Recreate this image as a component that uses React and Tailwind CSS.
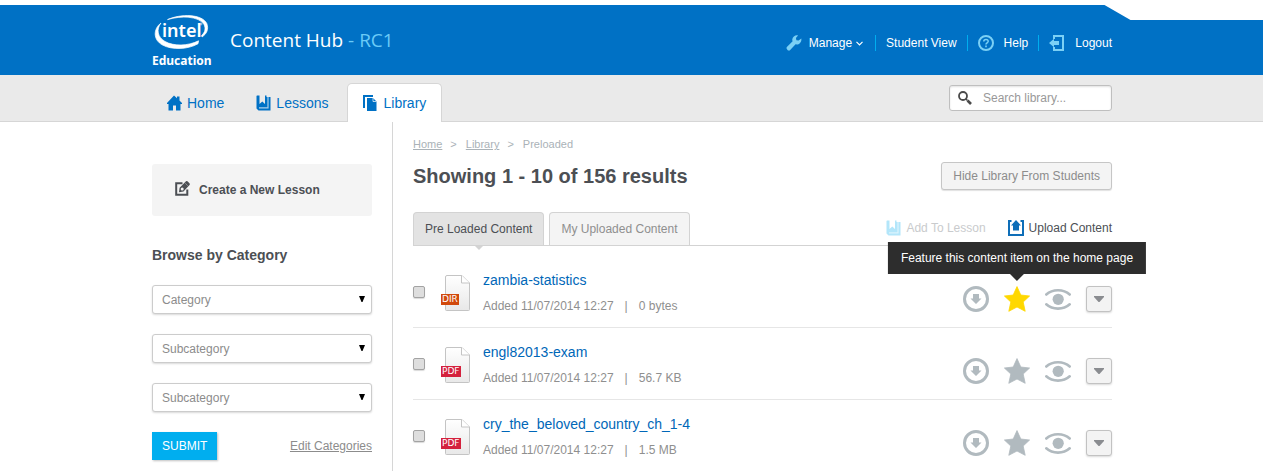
import React from "react";

const items = [
  { name: "zambia-statistics", kind: "DIR", size: "0 bytes", featured: true },
  { name: "engl82013-exam", kind: "PDF", size: "56.7 KB", featured: false },
  { name: "cry_the_beloved_country_ch_1-4", kind: "PDF", size: "1.5 MB", featured: false },
];

function Logo() {
  return (
    <svg width="60" height="56" viewBox="0 0 60 56" role="img" aria-label="Intel Education" className="overflow-visible">
      <path d="M15.500 4.600C29 -1.500 50 -1 54.800 8.500C57 14.500 54.500 19 50 22L49.600 20.400C53 17.500 54 13.500 52 9.500C47 1 29 0.500 15.500 4.600Z" fill="#fff" stroke="#fff" strokeWidth="0.700" />
      <path d="M9 8C1 14 1 25 10.500 30C20 35.200 36 34.500 46 28.800L46.600 25.800C36 31 22 31.500 13 26.500C5.500 22 4 14.500 9 8Z" fill="#fff" stroke="#fff" strokeWidth="0.700" />
      <text x="10" y="22" fill="#fff" className="font-['Noto_Sans'] text-[18px] font-semibold">intel</text>
      <circle cx="49" cy="9" r="1" fill="none" stroke="#fff" strokeWidth="0.600" />
      <text x="0" y="50" fill="#fff" className="font-['Noto_Sans'] text-[12px] font-bold">Education</text>
    </svg>
  );
}

function WrenchIcon() {
  return (
    <svg width="16" height="16" viewBox="0 0 16 16" fill="#7bd0f5" aria-hidden="true">
      <path d="M15.300 3.400L12.600 5.600L10.400 5.200L9.900 3L12 0.400C9.400 -0.200 6.600 1.600 6.300 4.300C6.200 5 6.300 5.700 6.600 6.300L0.600 12.300L0.600 13.700L2 15.500L3.700 15.400L9.600 9.300C12.900 10.200 16 7 15.300 3.400Z" />
    </svg>
  );
}

function HelpIcon() {
  return (
    <svg width="16" height="16" viewBox="0 0 16 16" fill="none" stroke="#7bd0f5" aria-hidden="true">
      <circle cx="8" cy="8" r="7" strokeWidth="2" />
      <path d="M5.800 6.500C5.800 3.700 10.200 3.800 10.200 6.300C10.200 7.900 8 7.800 8 9.600" strokeWidth="1.500" />
      <path d="M8 10.600V12.200" strokeWidth="1.600" />
    </svg>
  );
}

function LogoutIcon() {
  return (
    <svg width="16" height="16" viewBox="0 0 16 16" aria-hidden="true">
      <path d="M5 4V1H14V15H5V12" fill="none" stroke="#7bd0f5" strokeWidth="2" />
      <path d="M0 8L5 3.800V6H10V10H5V12.200Z" fill="#7bd0f5" />
    </svg>
  );
}

function HomeIcon() {
  return (
    <svg width="15" height="16" viewBox="0 0 15 16" fill="#0071c5" aria-hidden="true">
      <path d="M7 0.500L10 3.300V1.500H12.500V5.600L15 8V9H13.500V15.500H9V10.500H6V15.500H1.500V9H0V8Z" />
    </svg>
  );
}

function BookIcon({ main, light, page }) {
  return (
    <svg width="15" height="16" viewBox="0 0 15 16" aria-hidden="true">
      <path d="M1 0.500H10.500V2H14.500V15.500H2.500L0.500 13.500V1Z" fill={main} />
      <path d="M3.500 0H9V9L6.300 6.500L3.500 9Z" fill={page} />
      <path d="M11 0H15V1H13V2H11Z" fill={page} />
      <path d="M3 12.800H12V2" fill="none" stroke={light} strokeWidth="1.200" />
    </svg>
  );
}

function LibraryIcon() {
  return (
    <svg width="14" height="16" viewBox="0 0 14 16" aria-hidden="true">
      <path d="M1 13V1H10" fill="none" stroke="#0071c5" strokeWidth="2" />
      <path d="M4 3H10L13.500 6.500V16H4Z" fill="#0071c5" />
      <path d="M10 3V6.500H13.500" fill="none" stroke="#fff" strokeWidth="0.700" />
    </svg>
  );
}

function EditIcon() {
  return (
    <svg width="15" height="15" viewBox="0 0 15 15" className="mb-1" aria-hidden="true">
      <path d="M7.500 2.200H1.200V13.800H12.300V8.500" fill="none" stroke="#4c4f54" strokeWidth="2" />
      <path d="M4 11.300L4.600 6.800L11 0.300Q11.900 -0.300 12.800 0.500L14.600 2.400Q15.200 3.200 14.500 3.900L8.500 10.500Z" fill="#4c4f54" />
      <circle cx="7.200" cy="7.900" r="1.500" fill="#f4f4f4" />
      <path d="M10.300 2.200L12.800 4.800" stroke="#f4f4f4" strokeWidth="0.400" />
    </svg>
  );
}

function UploadIcon() {
  return (
    <svg width="16" height="16" viewBox="0 0 16 16" aria-hidden="true">
      <path d="M3.500 1H1V15H15V1H12.500" fill="none" stroke="#0e6eb8" strokeWidth="2" />
      <path d="M8 0L13 5.500H11V10.500H5V5.500H3Z" fill="#0e6eb8" />
    </svg>
  );
}

function SearchIcon() {
  return (
    <svg width="14" height="14" viewBox="0 0 14 14" fill="none" stroke="#4a4a4a" className="shrink-0" aria-hidden="true">
      <circle cx="5" cy="5" r="4" strokeWidth="1.800" />
      <path d="M8 8L9.500 9.500" strokeWidth="1.500" />
      <path d="M9.500 9.500L13 13" strokeWidth="2.600" />
    </svg>
  );
}

function DownloadIcon() {
  return (
    <svg width="26" height="26" viewBox="0 0 26 26" aria-hidden="true">
      <circle cx="13" cy="13" r="11.500" fill="none" stroke="#b1babf" strokeWidth="3" />
      <path d="M10 8H16V12.500H18.500L13 18L7.500 12.500H10Z" fill="#b1babf" />
    </svg>
  );
}

function StarIcon({ featured }) {
  return (
    <svg width="26" height="26" viewBox="0 0 26 26" fill={featured ? "#ffd800" : "#b1babf"} stroke={featured ? "#ffd800" : "#b1babf"} strokeWidth="0.800" strokeLinejoin="round" aria-hidden="true">
      <path d="M13 0.600L16.800 9L25.600 10L19.200 16L21.200 25.300L13 21L4.800 25.300L6.800 16L0.400 10L9.200 9Z" />
    </svg>
  );
}

function EyeIcon() {
  return (
    <svg width="26" height="26" viewBox="0 0 26 26" aria-hidden="true">
      <path d="M1.300 8.500C7.500 2.900 18.500 2.900 24.700 8.500M1.300 18.300C7.500 24 18.500 24 24.700 18.300" fill="none" stroke="#b1babf" strokeWidth="2.600" strokeLinecap="round" />
      <circle cx="13.200" cy="13.300" r="5.600" fill="#b1babf" />
    </svg>
  );
}

function FileIcon({ kind }) {
  return (
    <div className="relative h-9 w-[30px] shrink-0">
      <svg width="26" height="36" viewBox="0 0 26 36" className="ml-1" aria-hidden="true">
        <defs>
          <linearGradient id={`sheet-${kind}`} x1="0" y1="0" x2="0" y2="1">
            <stop offset="0" stopColor="#fff" />
            <stop offset="1" stopColor="#e8e8e8" />
          </linearGradient>
        </defs>
        <path d="M2 0.500H17L24.500 8V34.500Q24.500 35.500 23.500 35.500H1.500Q0.500 35.500 0.500 34.500V2Q0.500 0.500 2 0.500Z" fill={`url(#sheet-${kind})`} stroke="#c4c4c4" />
        <path d="M16.500 0.500V8H24.500" fill="#fff" stroke="#c4c4c4" />
      </svg>
      <span
        className={`absolute top-[19px] left-0 h-[11px] px-px font-['DejaVu_Sans'] text-[9px] leading-[11px] text-white ${
          kind === "DIR" ? "bg-[#d1490c]" : "bg-[#d4213d]"
        }`}
      >
        {kind}
      </span>
    </div>
  );
}

function CategorySelect({ label, id }) {
  return (
    <div className="relative">
      <select
        id={id}
        aria-label={label}
        className="block h-[29px] w-full appearance-none rounded-[3px] border border-[#ccc] bg-white px-[9px] text-xs text-[#8c8c8c] shadow-[0_1px_2px_rgba(0,0,0,0.15)]"
      >
        <option>{label}</option>
      </select>
      <svg width="6" height="6" viewBox="0 0 6 6" className="pointer-events-none absolute top-[11px] right-[7px]" aria-hidden="true">
        <path d="M0 0H6L3.500 6H2.500Z" fill="#000" />
      </svg>
    </div>
  );
}

function Row({ item }) {
  return (
    <li className="flex min-h-[72px] border-b border-[#e6e6e6] last:min-h-[71px] last:border-b-0">
      <input
        type="checkbox"
        aria-label={`Select ${item.name}`}
        className="mt-[30px] size-3 shrink-0 appearance-none rounded-[2px] border border-[#a3a3a3] bg-[#dedede] shadow-[0_1px_1px_rgba(0,0,0,0.15)]"
      />
      <div className="mt-[19px] ml-4">
        <FileIcon kind={item.kind} />
      </div>
      <div className="mt-[14px] ml-3 grow">
        <a href="#item" className="block text-sm leading-5 text-[#0067b8]">{item.name}</a>
        <p className="mt-[7px] flex text-xs leading-[18px] text-[#8f8f8f]">
          <span>Added 11/07/2014 12:27</span>
          <span className="mx-[11px]">|</span>
          <span>{item.size}</span>
        </p>
      </div>
      <div className="mt-[30px] flex h-[26px] gap-[15px]">
        <button type="button" aria-label="Download"><DownloadIcon /></button>
        <button type="button" aria-label="Feature on the home page" className="relative">
          <StarIcon featured={item.featured} />
          {item.featured && (
            <span role="tooltip" className="absolute bottom-[38px] left-1/2 h-8 -translate-x-1/2 bg-[#2d2d2d] px-[13px] text-xs leading-8 whitespace-nowrap text-white">
              Feature this content item on the home page
              <svg width="14" height="7" viewBox="0 0 14 7" className="absolute top-full left-1/2 -translate-x-1/2" aria-hidden="true">
                <path d="M0 0H14L7 7Z" fill="#2d2d2d" />
              </svg>
            </span>
          )}
        </button>
        <button type="button" aria-label="Preview"><EyeIcon /></button>
        <button type="button" aria-label="More actions" className="flex size-[26px] items-center justify-center rounded-[3px] border border-[#c2c2c2] bg-[#f3f3f3] shadow-[0_1px_2px_rgba(0,0,0,0.15)]">
          <svg width="10" height="6" viewBox="0 0 10 6" aria-hidden="true">
            <path d="M0 0H10V1L5.500 6H4.500L0 1Z" fill="#8a8c90" />
          </svg>
        </button>
      </div>
    </li>
  );
}

export default function App() {
  return (
    <div className="bg-white pt-[5px] font-['Liberation_Sans',Arial,sans-serif] text-[#4c4f54]">
      <header className="bg-[#0071c5] text-white [clip-path:polygon(0_0,calc(50%+473px)_0,calc(50%+499px)_15px,100%_15px,100%_100%,0_100%)]">
        <div className="mx-auto flex h-[70px] max-w-[961px] justify-between pl-px">
          <div className="flex">
            <a href="#top" className="mt-[10px]"><Logo /></a>
            <h1 className="mt-[22px] ml-[18px] font-['Open_Sans',sans-serif] text-[19px] leading-[26px]">
              Content Hub <span className="text-[#6bcbf7]">- RC1</span>
            </h1>
          </div>
          <nav aria-label="Account" className="mt-[30px] flex h-4 items-center text-xs leading-4">
            <button type="button" className="flex items-center pr-3">
              <WrenchIcon />
              <span className="ml-[7px]">Manage</span>
              <svg width="7" height="5" viewBox="0 0 7 5" className="ml-1" fill="none" stroke="#fff" aria-hidden="true">
                <path d="M0.500 0.800L3.500 3.800L6.500 0.800" strokeWidth="1.200" />
              </svg>
            </button>
            <a href="#student" className="border-l border-[#00aeef] px-[10px]">Student View</a>
            <a href="#help" className="flex items-center border-l border-[#00aeef] px-[10px]">
              <HelpIcon />
              <span className="ml-[10px]">Help</span>
            </a>
            <a href="#logout" className="flex items-center border-l border-[#00aeef] pl-[10px]">
              <LogoutIcon />
              <span className="ml-[10px]">Logout</span>
            </a>
          </nav>
        </div>
      </header>

      <div className="border-b border-[#d6d6d6] bg-[#eaeaea]">
        <div className="mx-auto flex h-[46px] max-w-[961px] items-end justify-between pl-px">
          <nav aria-label="Main" className="flex items-end text-sm leading-5 text-[#0071c5]">
            <a href="#home" className="flex h-9 items-center pl-[15px]">
              <HomeIcon />
              <span className="ml-[5px]">Home</span>
            </a>
            <a href="#lessons" className="flex h-9 items-center pl-8">
              <BookIcon main="#0071c5" light="#a9cfea" page="#eaeaea" />
              <span className="ml-[5px]">Lessons</span>
            </a>
            <a href="#library" aria-current="page" className="-mb-px ml-[18px] flex h-[39px] items-center rounded-t-[5px] border border-b-0 border-[#d6d6d6] bg-white px-[15px]">
              <LibraryIcon />
              <span className="ml-[7px]">Library</span>
            </a>
          </nav>
          <label className="mb-[10px] flex h-[26px] w-[163px] items-center rounded-[3px] border border-[#bfbfbf] bg-white pl-2 shadow-[inset_0_1px_2px_rgba(0,0,0,0.12)]">
            <SearchIcon />
            <input type="search" aria-label="Search library" placeholder="Search library..." className="ml-[11px] w-full min-w-0 bg-transparent text-xs outline-none placeholder:text-[#999]" />
          </label>
        </div>
      </div>

      <div className="mx-auto flex max-w-[961px] pl-px">
        <aside className="mr-5 w-[220px] shrink-0 pt-[42px]">
          <a href="#new" className="flex h-[52px] items-center rounded-[3px] bg-[#f4f4f4] pl-[23px] text-xs font-bold">
            <EditIcon />
            <span className="ml-[9px]">Create a New Lesson</span>
          </a>
          <h2 className="mt-[29px] text-sm leading-5 font-bold">Browse by Category</h2>
          <form className="mt-5 flex flex-col gap-5">
            <CategorySelect id="category" label="Category" />
            <CategorySelect id="subcategory" label="Subcategory" />
            <CategorySelect id="subcategory-2" label="Subcategory" />
            <div className="flex items-center justify-between text-xs">
              <button type="button" className="h-7 bg-[#00aeef] px-[10px] text-white shadow-[1px_1px_2px_rgba(0,0,0,0.25)]">SUBMIT</button>
              <a href="#edit" className="text-[#8c8c8c] underline">Edit Categories</a>
            </div>
          </form>
        </aside>

        <main className="grow border-l border-[#d6d6d6] pl-5">
          <nav aria-label="Breadcrumb" className="flex gap-2 pt-[14px] text-[11px] leading-4 text-[#aab2b7]">
            <a href="#home" className="underline">Home</a>
            <span>&gt;</span>
            <a href="#library" className="ml-px underline">Library</a>
            <span>&gt;</span>
            <span className="ml-px">Preloaded</span>
          </nav>
          <div className="mt-[10px] flex h-7 items-center justify-between">
            <h2 className="text-xl leading-7 font-bold">Showing 1 - 10 of 156 results</h2>
            <button type="button" className="h-7 rounded-[3px] border border-[#c6c6c6] bg-[#f4f4f4] px-[11px] text-xs text-[#8c8c8c] shadow-[0_1px_1px_rgba(0,0,0,0.12)]">
              Hide Library From Students
            </button>
          </div>

          <div className="mt-[22px] flex justify-between border-b border-[#d3d3d3] text-xs">
            <div role="tablist" className="flex gap-[5px]">
              <button type="button" role="tab" aria-selected="true" className="relative h-[33px] rounded-t-[4px] border border-b-0 border-[#d3d3d3] bg-[#e3e3e3] px-[11px]">
                Pre Loaded Content
                <svg width="8" height="4" viewBox="0 0 8 4" className="absolute top-full left-1/2 mt-px -translate-x-1/2" aria-hidden="true">
                  <path d="M0 0H8L4 4Z" fill="#d3d3d3" />
                </svg>
              </button>
              <button type="button" role="tab" aria-selected="false" className="h-[33px] rounded-t-[4px] border border-b-0 border-[#d3d3d3] bg-[#f4f4f4] px-[11px] text-[#8f8f8f]">
                My Uploaded Content
              </button>
            </div>
            <div className="flex h-8 items-center gap-[22px]">
              <button type="button" disabled className="flex items-center gap-[5px] text-[#c9cbcd]">
                <BookIcon main="#b3e6fa" light="#dcf4fd" page="#fff" />
                Add To Lesson
              </button>
              <button type="button" className="flex items-center gap-[5px]">
                <UploadIcon />
                Upload Content
              </button>
            </div>
          </div>

          <ul className="pt-[10px]">
            {items.map((item) => (
              <Row key={item.name} item={item} />
            ))}
          </ul>
        </main>
      </div>
    </div>
  );
}
